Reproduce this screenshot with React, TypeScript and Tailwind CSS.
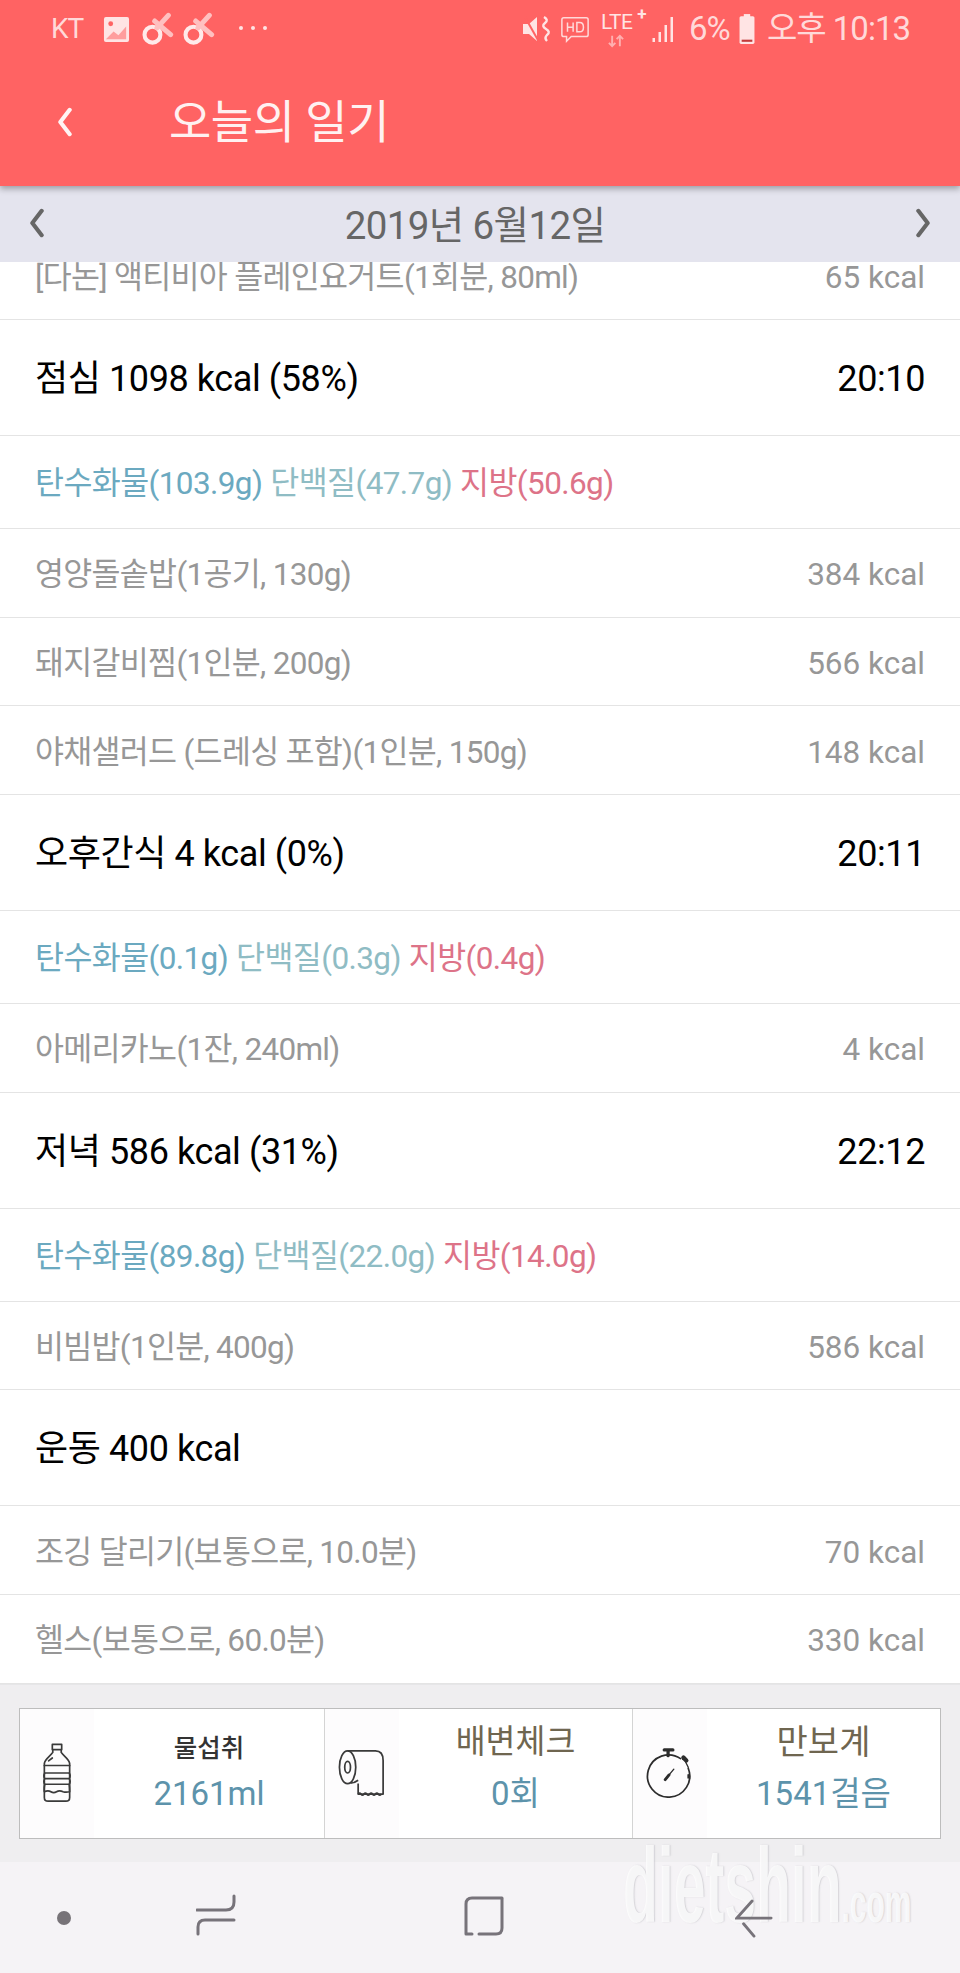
const font = "font-['Roboto','Noto_Sans_CJK_KR',sans-serif]";

const FoodRow = ({ name, kcal }: { name: string; kcal?: string }) => (
  <div className="h-[88.7px] flex justify-between items-center pt-[4px] pl-[35px] pr-[35px] border-b border-[#e4e4e4] text-[31.5px] tracking-[-0.7px] text-[#979797]">
    <span>{name}</span>
    <span className="tracking-[0px]">{kcal}</span>
  </div>
);

const MealRow = ({ title, time }: { title: string; time?: string }) => (
  <div className="h-[116px] flex justify-between items-center pt-[3px] pl-[35px] pr-[35px] border-b border-[#e4e4e4] text-[36px] tracking-[-0.4px] text-black">
    <span>{title}</span>
    <span>{time}</span>
  </div>
);

const MacroRow = ({ carb, protein, fat }: { carb: string; protein: string; fat: string }) => (
  <div className="h-[93px] flex items-center gap-[8px] pt-[3px] pl-[35px] border-b border-[#e4e4e4] text-[31.5px] tracking-[-0.6px]">
    <span className="text-[#6ba9c0]">탄수화물({carb})</span>
    <span className="text-[#8fbcc4]">단백질({protein})</span>
    <span className="text-[#dd7388]">지방({fat})</span>
  </div>
);

const Chevron = ({ dir, className }: { dir: "left" | "right"; className: string }) => (
  <svg viewBox="0 0 20 32" className={className} fill="none" stroke="currentColor" strokeWidth="4.4" strokeLinecap="round" strokeLinejoin="round">
    <path d={dir === "left" ? "M15 3 L5 16 L15 29" : "M5 3 L15 16 L5 29"} />
  </svg>
);

const BottleIcon = () => (
  <svg viewBox="0 0 32 64" className="w-[30px] h-[62px]" fill="none" stroke="#3a3a3a" strokeWidth="1.8" strokeLinejoin="round" strokeLinecap="round">
    <path d="M11 1.5 h10 v5.5 h-10 z" />
    <path d="M11.5 7 v3 C9 14 3 17 2.5 22 v36 q0 4 4 4 h19 q4 0 4 -4 v-36 C29 17 23 14 20.5 10 v-3" />
    <path d="M2.5 24 h27 M3 32 q-2 3 0 6 h26 q2 -3 0 -6 z M3 38 q-2 3 0 6 h26 q2 -3 0 -6 M3 44 q-1 4 -0.5 8 q4 -2 7 0 q3 2 6 0 q3 -2 7 0 q3 1 7 0 q0 -4 -.5 -8" />
    <path d="M7 19 l4 -3" />
  </svg>
);

const RollIcon = () => (
  <svg viewBox="0 0 50 50" className="w-[48px] h-[48px]" fill="none" stroke="#3a3a3a" strokeWidth="1.8" strokeLinejoin="round">
    <ellipse cx="10" cy="19" rx="8.5" ry="17" />
    <ellipse cx="10" cy="19" rx="3" ry="6" />
    <path d="M10 2 H39 q8 0 8 10 V47 H21 V36" />
    <path d="M13 35.5 q4 0 8 -3" />
    <path d="M21 47 q1.5 -2 3 0 t3 0 t3 0 t3 0 t3 0 t3 0 t3 0 t3 0" />
  </svg>
);

const WatchIcon = () => (
  <svg viewBox="0 0 50 52" className="w-[48px] h-[50px]" fill="none" stroke="#2c2c2c" strokeWidth="1.8" strokeLinecap="round">
    <path d="M44 21 A22 22 0 1 1 36 11" />
    <path d="M44 28 v3" />
    <path d="M19 2 h9 M23 2 v6" strokeWidth="3.4" />
    <path d="M39 10 l3 3" strokeWidth="4.5" />
    <path d="M41 14 l3 6" strokeWidth="1.4" />
    <path d="M20 33 l4 -5" strokeWidth="3" />
    <path d="M24 28 l5 -6" strokeWidth="1.4" />
  </svg>
);

const StatusBar = () => (
  <div className="h-[58px] flex items-center justify-between pl-[51px] pr-[50px] text-[#ffd9d9] text-[28px] tracking-[-1px]">
    <div className="flex items-center">
      <span className="w-[52px]">KT</span>
      <svg viewBox="0 0 28 28" className="w-[27px] h-[27px] mr-[10px]">
        <rect x="1" y="1" width="26" height="26" rx="2" fill="#ffe4e4" />
        <path d="M3 24 l8 -8 l5 4 l8 -9 v13 z" fill="#ff6363" opacity="0.55" />
        <circle cx="8" cy="8" r="2.5" fill="#ff6363" />
      </svg>
      {[0, 1].map((i) => (
        <svg key={i} viewBox="0 0 30 30" className="w-[34px] h-[34px] mr-[7px]" fill="none">
          <circle cx="11" cy="20" r="7" stroke="#ffeaea" strokeWidth="3.6" />
          <path d="M15 14 L25 3 M13 8 L27 20" stroke="#ffc0c0" strokeWidth="4.5" strokeLinecap="round" />
        </svg>
      ))}
      <span className="ml-[17px] -mt-[2px] flex gap-[8px]">
        <i className="size-[4px] rounded-full bg-[#ffe4e4]" />
        <i className="size-[4px] rounded-full bg-[#ffe4e4]" />
        <i className="size-[4px] rounded-full bg-[#ffe4e4]" />
      </span>
    </div>
    <div className="flex items-center text-[33px]">
      <svg viewBox="0 0 30 30" className="w-[30px] h-[30px] mr-[8px]" fill="none">
        <path d="M1 10 h6 l8 -7 v24 l-8 -7 h-6 z" fill="#ffe4e4" />
        <path d="M3 3 L17 28" stroke="#ff6363" strokeWidth="2" />
        <path d="M22 3 q5 3 1 6 q-4 3 1 6 q5 3 1 6 q-3 3 0 6" stroke="#ffe4e4" strokeWidth="2.4" />
      </svg>
      <svg viewBox="0 0 32 32" className="w-[30px] h-[32px] mr-[11px]" fill="none" stroke="#ffd9d9" strokeWidth="1.6">
        <path d="M4 4 h24 q2 0 2 2 v16 q0 2 -2 2 h-16 l-5 5 v-5 h-3 q-2 0 -2 -2 v-16 q0 -2 2 -2 z" />
        <path d="M8 9 v10 M14 9 v10 M8 14 h6 M18 9 v10 h3 q4 0 4 -5 t-4 -5 z" />
      </svg>
      <span className="relative w-[42px] h-[38px] mr-[8px] text-[21px] leading-[24px] text-[#ffe4e4] tracking-[-0.5px]">
        LTE<span className="absolute -top-[4px] -right-[3px] text-[17px] leading-[17px] font-bold">+</span>
        <svg viewBox="0 0 14 10" className="absolute left-[6px] bottom-0 w-[18px] h-[14px]" fill="none" stroke="#ffb0b0" strokeWidth="1.5">
          <path d="M4 1 v8 M1.5 6.5 L4 9 L6.5 6.5 M10 9 v-8 M7.5 3.5 L10 1 L12.5 3.5" />
        </svg>
      </span>
      <svg viewBox="0 0 26 30" className="w-[27px] h-[30px] mr-[11px]" fill="#ffe4e4">
        <rect x="1" y="24" width="2.5" height="4" />
        <rect x="7" y="18" width="2.5" height="10" />
        <rect x="13" y="11" width="2.5" height="17" />
        <rect x="19" y="3" width="2.5" height="25" />
      </svg>
      <span className="w-[38px] mr-[11px] whitespace-nowrap">6%</span>
      <svg viewBox="0 0 16 30" className="w-[18px] h-[32px] mr-[11px]">
        <rect x="5" y="1" width="6" height="3" fill="#ffe4e4" />
        <rect x="1" y="3" width="14" height="26" rx="1.5" fill="#ffe4e4" />
        <rect x="3" y="25" width="10" height="2" fill="#c23a3a" />
      </svg>
      <span className="whitespace-nowrap">오후 10:13</span>
    </div>
  </div>
);

const StatCell = ({
  icon,
  label,
  value,
  labelClass,
  width,
}: {
  icon: React.ReactNode;
  label: string;
  value: string;
  labelClass: string;
  width: string;
}) => (
  <div className={`${width} flex items-center border-r border-[#d4d4d4] last:border-r-0`}>
    <div className="w-[74px] flex justify-center shrink-0 bg-[#fdfcfd] self-stretch items-center">{icon}</div>
    <div className="flex-1 flex flex-col items-center pb-[9px]">
      <span className={labelClass}>{label}</span>
      <span className="text-[33px] leading-[40px] text-[#5d93ab] mt-[14px]">{value}</span>
    </div>
  </div>
);

export default function App() {
  return (
    <div className={`${font} relative w-[960px] h-[1973px] overflow-hidden bg-white`}>
      <header className="relative z-10 h-[186px] bg-[#ff6363] shadow-[0_3px_6px_rgba(0,0,0,0.3)]">
        <StatusBar />
        <div className="flex items-center h-[128px] text-white">
          <Chevron dir="left" className="w-[20px] h-[30px] ml-[55px] text-[#fff4f4]" />
          <h1 className="ml-[94px] text-[46px] tracking-[-0.5px] font-normal text-[#fff1f1]">오늘의 일기</h1>
        </div>
      </header>

      <div className="h-[76px] bg-[#e4e4ee] flex items-center justify-between pt-[3px] pl-[27px] pr-[27px] text-[#666666]">
        <Chevron dir="left" className="w-[20px] h-[30px] -mt-[6px]" />
        <span className="text-[38.5px] tracking-[-0.6px] -ml-[10px]">2019년 6월12일</span>
        <Chevron dir="right" className="w-[20px] h-[30px] -mt-[6px]" />
      </div>

      <div className="h-[58px] overflow-hidden">
        <div className="-mt-[30.7px]">
          <FoodRow name="[다논] 액티비아 플레인요거트(1회분, 80ml)" kcal="65 kcal" />
        </div>
      </div>

      <MealRow title="점심 1098 kcal (58%)" time="20:10" />
      <MacroRow carb="103.9g" protein="47.7g" fat="50.6g" />
      <FoodRow name="영양돌솥밥(1공기, 130g)" kcal="384 kcal" />
      <FoodRow name="돼지갈비찜(1인분, 200g)" kcal="566 kcal" />
      <FoodRow name="야채샐러드 (드레싱 포함)(1인분, 150g)" kcal="148 kcal" />
      <MealRow title="오후간식 4 kcal (0%)" time="20:11" />
      <MacroRow carb="0.1g" protein="0.3g" fat="0.4g" />
      <FoodRow name="아메리카노(1잔, 240ml)" kcal="4 kcal" />
      <MealRow title="저녁 586 kcal (31%)" time="22:12" />
      <MacroRow carb="89.8g" protein="22.0g" fat="14.0g" />
      <FoodRow name="비빔밥(1인분, 400g)" kcal="586 kcal" />
      <MealRow title="운동 400 kcal" />
      <FoodRow name="조깅 달리기(보통으로, 10.0분)" kcal="70 kcal" />
      <FoodRow name="헬스(보통으로, 60.0분)" kcal="330 kcal" />

      <div className="h-[178px] bg-[#efeef0] border-t border-[#e6e6e8] pt-[23px] px-[19px]">
        <div className="h-[131px] flex bg-white border border-[#bdbdbd]">
          <StatCell
            width="w-[305px]"
            icon={<BottleIcon />}
            label="물섭취"
            labelClass="h-[36px] text-[25.5px] leading-[48px] text-[#333333] font-medium"
            value="2161ml"
          />
          <StatCell
            width="w-[308px]"
            icon={<RollIcon />}
            label="배변체크"
            labelClass="h-[36px] text-[32.5px] leading-[36px] text-[#6f6650]"
            value="0회"
          />
          <StatCell
            width="flex-1"
            icon={<WatchIcon />}
            label="만보계"
            labelClass="h-[36px] text-[34px] leading-[36px] text-[#6f6650]"
            value="1541걸음"
          />
        </div>
      </div>

      <nav className="relative h-[112px] bg-[#f5f3f6]">
        <span className="absolute left-[57px] top-[49px] size-[14px] rounded-full bg-[#777378]" />
        <svg viewBox="0 0 40 42" className="absolute left-[196px] top-[32px] w-[40px] h-[42px]" fill="none" stroke="#77737a" strokeWidth="3" strokeLinecap="round" strokeLinejoin="round">
          <path d="M1 16 H30 Q38 16 38 8 V2" />
          <path d="M38 26 H9 Q2 26 2 33 V40" />
        </svg>
        <svg viewBox="0 0 40 40" className="absolute left-[464px] top-[34px] w-[40px] h-[40px]" fill="none" stroke="#77737a" strokeWidth="3" strokeLinecap="round" strokeLinejoin="round">
          <path d="M38 2 H8 Q2 2 2 8 V38 H8" />
          <path d="M38 3 V32 Q38 38 32 38 H15" />
        </svg>
        <svg viewBox="0 0 40 42" className="absolute z-10 left-[735px] top-[37px] w-[38px] h-[40px]" fill="none" stroke="#77737a" strokeWidth="3" strokeLinecap="round">
          <path d="M18 2 L2 20 H38 M9 26 L20 39" />
        </svg>
      </nav>

      <div className="absolute left-[623px] top-[1832px] flex items-baseline text-white/80 font-['Liberation_Sans',sans-serif] font-bold [text-shadow:1px_0_1px_rgba(170,170,178,0.45)] origin-top scale-y-[1.87]">
        <span className="text-[57px] leading-[57px]">dietshin</span>
        <span className="text-[30px] leading-[30px]">.com</span>
      </div>
    </div>
  );
}
